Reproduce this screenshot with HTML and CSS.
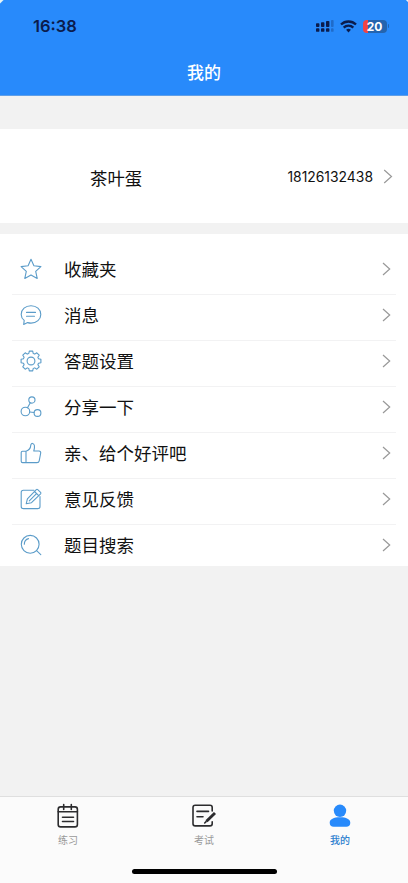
FILE: index.html
```
<!DOCTYPE html>
<html lang="zh-CN">
<head>
<meta charset="utf-8">
<meta name="viewport" content="width=device-width, initial-scale=1">
<title>我的</title>
<link rel="stylesheet" href="styles.css">
</head>
<body>
<div class="app">
  <header class="header">
    <div class="status">
      <span class="time">16:38</span>
      <div class="status-icons">
        <svg class="signal" width="18" height="12" viewBox="0 0 18 12" fill="#0b1c4d">
          <rect x="0" y="3.2" width="3.4" height="3.8" rx=".8"/><rect x="5" y="2.2" width="3.4" height="4.8" rx=".8"/><rect x="10" y="1" width="3.4" height="6" rx=".8"/><rect x="15" y="0" width="2.6" height="7" rx=".8" opacity=".28"/>
          <rect x="0" y="8.2" width="3.4" height="3.6" rx=".9"/><rect x="5" y="8.2" width="3.4" height="3.6" rx=".9"/><rect x="10" y="8.2" width="3.4" height="3.6" rx=".9"/><rect x="15" y="8.2" width="2.6" height="3.6" rx=".9" opacity=".28"/>
        </svg>
        <svg class="wifi" width="17" height="13" viewBox="0 0 17 13" fill="none" stroke="#0b1c4d" stroke-width="2.4">
          <path d="M1 4.5a10.8 10.8 0 0 1 15 0"/><path d="M3.7 7.6a6.9 6.9 0 0 1 9.6 0"/><path d="M6.1 9.8a3.5 3.5 0 0 1 4.8 0L8.5 12.4z" fill="#0b1c4d" stroke="none"/>
        </svg>
        <div class="battery"><span class="level">20</span></div>
        <i class="battery-tip"></i>
      </div>
    </div>
    <h1 class="title">我的</h1>
  </header>

  <section class="profile">
    <span class="name">茶叶蛋</span>
    <span class="phone">18126132438</span>
    <svg class="chevron" width="10" height="15" viewBox="0 0 10 15"><path d="M1.2 1l7.3 6.5L1.2 14"/></svg>
  </section>

  <ul class="menu">
    <li class="row">
      <svg class="icon" viewBox="0 0 22 22"><path d="M11 1.3l2.900 6.500 7 .8-5.200 4.800 1.500 7L11 16.900l-6.200 3.500 1.500-7L1.100 8.600l7-.8z"/></svg>
      <span class="label">收藏夹</span><svg class="chevron" width="9" height="14" viewBox="0 0 9 14"><path d="M1 1l6.700 6L1 13"/></svg>
    </li>
    <li class="row">
      <svg class="icon" viewBox="0 0 22 22"><path d="M4.200 16.400C2.300 14.800 1.200 12.700 1.200 10.400 1.200 5.500 5.500 1.700 11 1.700s9.800 3.800 9.800 8.700-4.300 8.700-9.800 8.700c-1.200 0-2.300-.2-3.400-.5L3.700 20.400z"/><path d="M6.500 8.400h9M6.500 12.300h8"/></svg>
      <span class="label">消息</span><svg class="chevron" width="9" height="14" viewBox="0 0 9 14"><path d="M1 1l6.700 6L1 13"/></svg>
    </li>
    <li class="row">
      <svg class="icon" viewBox="0 0 22 22"><g transform="translate(11 11)"><path d="M-2.200-7.500L-1.700-9.900H1.700L2.200-7.500Q3.200-7.200 3.750-6.860L5.800-8.200 8.200-5.800 6.860-3.750Q7.200-3.200 7.500-2.200L9.900-1.700V1.700L7.500 2.200Q7.200 3.200 6.860 3.750L8.200 5.800 5.800 8.200 3.750 6.860Q3.200 7.200 2.200 7.500L1.700 9.900H-1.700L-2.200 7.500Q-3.200 7.200-3.750 6.860L-5.800 8.200-8.200 5.800-6.860 3.750Q-7.200 3.200-7.500 2.200L-9.900 1.700V-1.700L-7.500-2.200Q-7.200-3.200-6.860-3.750L-8.200-5.800-5.800-8.200-3.750-6.860Q-3.200-7.200-2.200-7.500z"/><circle r="3.900"/></g></svg>
      <span class="label">答题设置</span><svg class="chevron" width="9" height="14" viewBox="0 0 9 14"><path d="M1 1l6.700 6L1 13"/></svg>
    </li>
    <li class="row">
      <svg class="icon" viewBox="0 0 22 22"><circle cx="11.900" cy="4" r="3.100"/><circle cx="5.400" cy="15.500" r="4.300"/><circle cx="17.500" cy="17" r="3.400"/><path d="M10.300 6.700L7.500 11.800M9.700 16l4.400.5"/></svg>
      <span class="label">分享一下</span><svg class="chevron" width="9" height="14" viewBox="0 0 9 14"><path d="M1 1l6.700 6L1 13"/></svg>
    </li>
    <li class="row">
      <svg class="icon" viewBox="0 0 22 22"><path d="M6 9.200H2.500q-1.300 0-1.300 1.300v8.800q0 1.300 1.300 1.300H17c1.200 0 2-.7 2.200-1.800l1.500-7.800c.2-1.200-.5-2-1.700-2h-5.200c.6-2.300.9-4.100.6-5.500-.5-2.600-3.400-2.800-3.600-.4C10.600 6.200 9 8.300 6 9.200zM6 9.200v11.400"/></svg>
      <span class="label">亲、给个好评吧</span><svg class="chevron" width="9" height="14" viewBox="0 0 9 14"><path d="M1 1l6.700 6L1 13"/></svg>
    </li>
    <li class="row">
      <svg class="icon" viewBox="0 0 22 22"><path d="M14 2.200H3.400Q1.200 2.200 1.200 4.400v14q0 2.200 2.200 2.200h14.400q2.200 0 2.200-2.200V8.500"/><path d="M6.200 15.800l1.200-5L16.300 1.600q.7-.6 1.400 0l2.900 2.800q.6.700 0 1.400L11.500 14.700zM14.500 3.500l4.200 4.200M9.300 12.800l7.200-7.200"/></svg>
      <span class="label">意见反馈</span><svg class="chevron" width="9" height="14" viewBox="0 0 9 14"><path d="M1 1l6.700 6L1 13"/></svg>
    </li>
    <li class="row">
      <svg class="icon" viewBox="0 0 22 22"><circle cx="10.200" cy="10.300" r="8.900"/><path d="M16.600 16.700l4.200 4M4.300 10.300c0-2.900 1.700-5 4.200-5.700"/></svg>
      <span class="label">题目搜索</span><svg class="chevron" width="9" height="14" viewBox="0 0 9 14"><path d="M1 1l6.700 6L1 13"/></svg>
    </li>
  </ul>

  <nav class="tabs">
    <a class="tab">
      <svg class="tab-icon" viewBox="0 0 24 26"><rect x="2.200" y="3.900" width="19.200" height="20" rx="2.400"/><path d="M2.200 8.800h19.200M7.700 1.500v5M15.300 1.500v5M6.500 14.200h11M6.500 18.500h11"/></svg>
      <span>练习</span>
    </a>
    <a class="tab">
      <svg class="tab-icon" viewBox="0 0 24 26"><path d="M20.200 8V4.500q0-2.200-2.200-2.200H3.200Q1 2.300 1 4.500v16.200q0 2.200 2.200 2.200H18q2.200 0 2.200-2.200v-1.900M5 8.400h11.500M5 13.800h6"/><path class="pen" d="M14.500 18.300l8.500-8.300"/><path d="M12.700 20l1.400-1.400"/></svg>
      <span>考试</span>
    </a>
    <a class="tab active">
      <svg class="tab-icon" viewBox="0 0 24 26"><circle cx="12" cy="7.800" r="6.200"/><path d="M1.700 19.700c0-3.600 4-5.500 10.300-5.500s10.300 1.900 10.300 5.500c0 2.800-1.500 4.100-4 4.100H5.700c-2.500 0-4-1.300-4-4.100z"/></svg>
      <span>我的</span>
    </a>
  </nav>
  <div class="home-indicator"></div>
</div>
</body>
</html>
```
FILE: styles.css
```
* {
  box-sizing: border-box;
}

body {
  margin: 0;
  background: #f2f2f2;
  color: #111;
  font-family: Inter, "Noto Sans CJK SC", sans-serif;
}

.app {
  position: relative;
  display: flex;
  flex-direction: column;
  height: 883px;
  overflow: hidden;
}

.header {
  flex: none;
  height: 96px;
  background:
    linear-gradient(135deg, #e8f5f6 2px, transparent 3px),
    linear-gradient(225deg, #e8f5f6 1px, transparent 2px),
    #288afb;
  border-bottom: 1px solid #5f9fe8;
}

.status {
  display: flex;
  align-items: center;
  justify-content: space-between;
  height: 52px;
  padding: 0 19px 0 33px;
}

.time {
  color: #0b1c4d;
  font-size: 16.5px;
  font-weight: 600;
}

.status-icons {
  display: flex;
  align-items: center;
}

.signal {
  margin-right: 6px;
}

.wifi {
  margin-right: 6px;
}

.battery {
  width: 24px;
  height: 13px;
  border-radius: 4px;
  background: linear-gradient(90deg, #f04444 5px, #2464ae 5px);
  color: #fff;
  font-size: 12px;
  font-weight: 700;
  line-height: 13px;
  text-align: center;
}

.battery-tip {
  width: 1.5px;
  height: 4px;
  margin-left: 1px;
  border-radius: 0 2px 2px 0;
  background: #2464ae;
}

.title {
  margin: 8px 0 0;
  color: #fff;
  font-size: 17px;
  font-weight: 500;
  line-height: 26px;
  text-align: center;
}

.profile {
  flex: none;
  display: flex;
  align-items: center;
  height: 94px;
  margin: 33px 0 11px;
  padding: 0 15px 0 90px;
  background: #fff;
}

.name {
  flex: 1;
  padding-top: 2px;
  font-size: 17.4px;
}

.phone {
  margin-right: 10px;
  padding-top: 1px;
  font-size: 13.9px;
}

.chevron {
  flex: none;
  fill: none;
  stroke: #999;
  stroke-width: 1.2;
}

.menu {
  flex: none;
  height: 332px;
  margin: 0;
  padding: 15px 12px 0;
  background: #fff;
  list-style: none;
}

.row {
  display: flex;
  align-items: center;
  height: 46px;
  padding: 0 5px 5px 8px;
  border-bottom: 1px solid #f2f2f3;
}

.row:last-child {
  height: 41px;
  padding-bottom: 1px;
  border-bottom: 0;
}

.icon {
  width: 22px;
  height: 22px;
  margin-right: 22px;
  fill: none;
  stroke: #5b9cc9;
  stroke-width: 1.1;
  stroke-linejoin: round;
  stroke-linecap: round;
}

.label {
  flex: 1;
  padding-top: 2px;
  font-size: 17.5px;
  line-height: 26px;
}

.tabs {
  display: flex;
  height: 87px;
  margin-top: auto;
  border-top: 1px solid #dfdfdf;
  background: #fbfbfb;
}

.tab {
  flex: 1;
  display: flex;
  flex-direction: column;
  align-items: center;
  padding-top: 6px;
  color: #999;
  font-size: 10px;
  line-height: 15px;
}

.tab-icon {
  width: 24px;
  height: 26px;
  margin-bottom: 4px;
  fill: none;
  stroke: #2c2c2e;
  stroke-width: 1.6;
  stroke-linecap: round;
}

.pen {
  stroke-width: 3;
  stroke-linecap: butt;
}

.active {
  color: #2e80cf;
  font-weight: 500;
}

.active .tab-icon {
  fill: #288afb;
  stroke: none;
}

.home-indicator {
  position: absolute;
  bottom: 9px;
  left: 132px;
  width: 145px;
  height: 5px;
  border-radius: 3px;
  background: #000;
}
```
